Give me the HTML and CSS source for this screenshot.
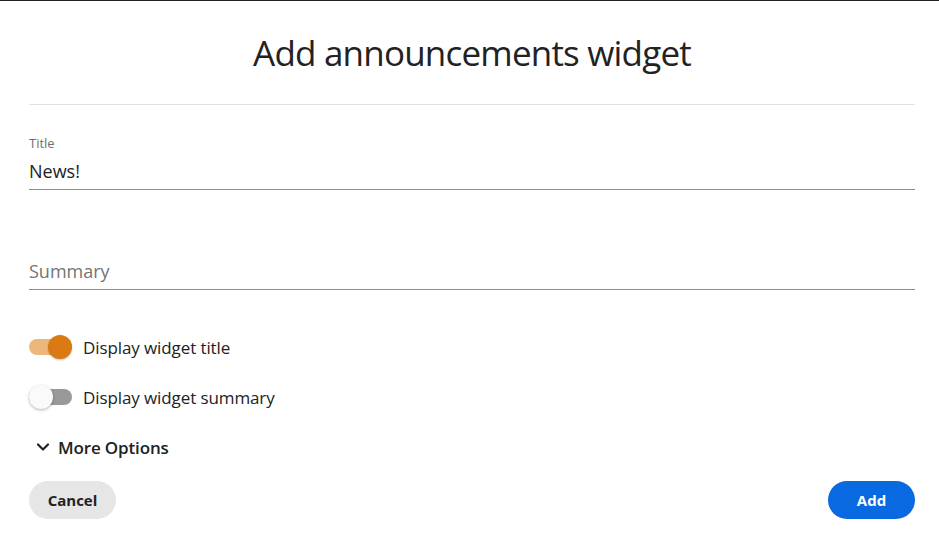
FILE: index.html
```html
<!DOCTYPE html>
<html lang="en">
<head>
<meta charset="utf-8">
<title>Add announcements widget</title>
<link rel="stylesheet" href="styles.css">
</head>
<body>
<div class="dialog">
  <h1 class="heading">Add announcements widget</h1>
  <div class="divider"></div>
  <div class="field">
    <div class="field-label">Title</div>
    <div class="field-input">News!</div>
  </div>
  <div class="field">
    <div class="field-label"></div>
    <div class="field-input placeholder">Summary</div>
  </div>
  <div class="options">
    <div class="switch-row">
      <span class="switch switch-on"><span class="knob"></span></span>
      <span class="switch-label">Display widget title</span>
    </div>
    <div class="switch-row">
      <span class="switch switch-off"><span class="knob"></span></span>
      <span class="switch-label">Display widget summary</span>
    </div>
    <div class="more-row">
      <svg class="chevron" width="14" height="10" viewBox="0 0 14 10"><path d="M2 2.5 L7 7.5 L12 2.5" fill="none" stroke="#222" stroke-width="2.2" stroke-linecap="round" stroke-linejoin="round"/></svg>
      <span class="more-label">More Options</span>
    </div>
  </div>
  <div class="actions">
    <button class="btn btn-secondary">Cancel</button>
    <button class="btn btn-primary">Add</button>
  </div>
</div>
</body>
</html>
```
FILE: styles.css
```css
html, body {
  margin: 0;
  padding: 0;
  background: #ffffff;
}
body {
  font-family: "Open Sans", "Noto Sans", sans-serif;
  color: #222222;
}
.dialog {
  border-top: 1px solid #222222;
  padding: 0 24px 0 29px;
}
.heading {
  margin: 27px 0 26px;
  font-size: 35px;
  line-height: 50px;
  font-weight: 400;
  text-align: center;
  letter-spacing: -0.8px;
  color: #222222;
}
.divider {
  height: 1px;
  background: #e1e1e1;
}
.field {
  margin-top: 30px;
}
.field + .field {
  margin-top: 45px;
}
.field-label {
  font-size: 13px;
  line-height: 16px;
  height: 16px;
  color: #707070;
}
.field-input {
  margin-top: 8px;
  font-size: 18px;
  line-height: 24px;
  padding-bottom: 6px;
  border-bottom: 1px solid #8e8e8e;
  color: #222222;
}
.placeholder {
  color: #747474;
}
.options {
  margin-top: 32px;
}
.switch-row {
  display: flex;
  align-items: center;
  gap: 11px;
  height: 50px;
}
.switch {
  position: relative;
  width: 43px;
  height: 16px;
  border-radius: 8px;
  flex: none;
}
.switch-on {
  background: #edb77b;
}
.switch-off {
  background: #999999;
}
.knob {
  position: absolute;
  top: -4px;
  width: 24px;
  height: 24px;
  border-radius: 50%;
}
.switch-on .knob {
  right: 0;
  background: #db7a13;
  box-shadow: 0 1px 2px rgba(0,0,0,0.25);
}
.switch-off .knob {
  left: 0;
  background: #fafafa;
  box-shadow: 0 1px 3px rgba(0,0,0,0.3);
}
.switch-label {
  font-size: 17px;
  letter-spacing: -0.1px;
}
.more-row {
  display: flex;
  align-items: center;
  gap: 8px;
  height: 50px;
  padding-left: 7px;
}
.more-label {
  font-size: 17px;
  font-weight: 600;
  letter-spacing: -0.15px;
}
.actions {
  display: flex;
  justify-content: space-between;
  margin-top: 9px;
}
.btn {
  height: 38px;
  min-width: 87px;
  padding: 0 18px;
  border: none;
  border-radius: 19px;
  font-family: "Open Sans", "Noto Sans", sans-serif;
  font-size: 15px;
  font-weight: 700;
}
.btn-secondary {
  background: #e6e6e6;
  color: #222222;
}
.btn-primary {
  background: #0869e0;
  color: #ffffff;
}
```
